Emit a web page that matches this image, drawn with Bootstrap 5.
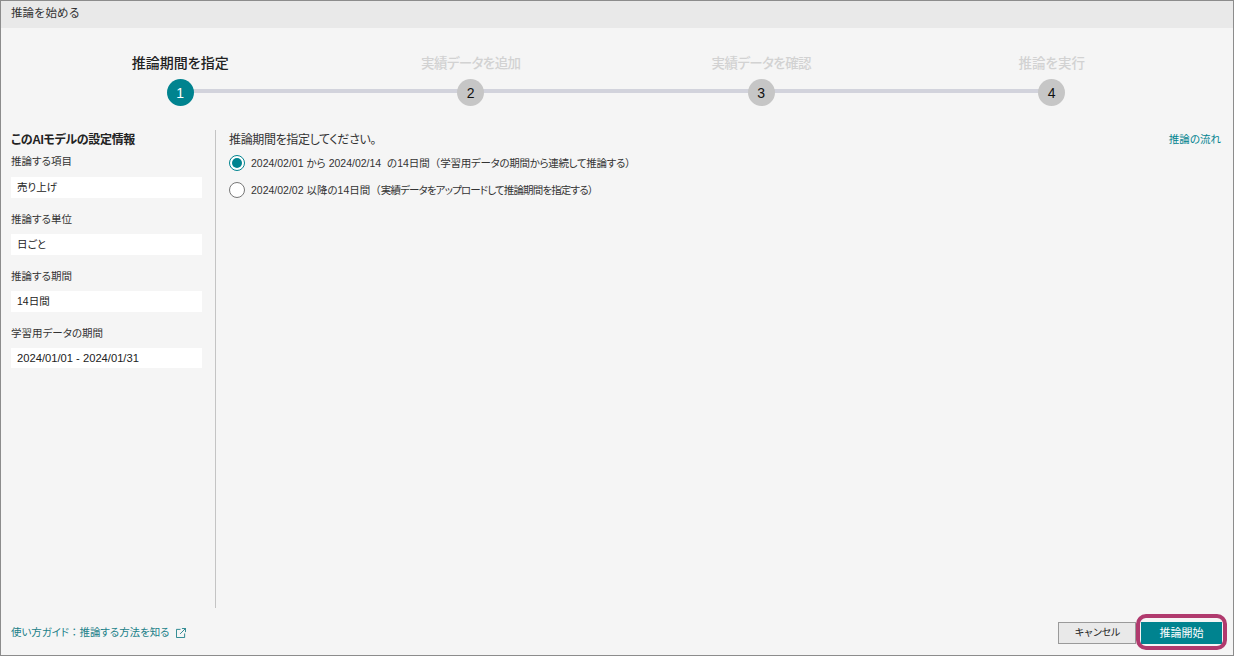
<!DOCTYPE html>
<html lang="ja">
<head>
<meta charset="utf-8">
<title>推論を始める</title>
<link href="https://cdn.jsdelivr.net/npm/bootstrap@5.3.0/dist/css/bootstrap.min.css" rel="stylesheet">
<style>
html,body{height:100%;margin:0;overflow:hidden}
body{font-family:"Liberation Sans","Noto Sans CJK JP",sans-serif;font-size:10.5px;color:#222;background:#f5f5f5;font-feature-settings:"palt"}
.win{height:656px;border:1px solid #8c8c8c;background:#f5f5f5}
.win-title{height:27px;background:#e9e9e9;padding-left:10px;font-size:11.5px;line-height:25px;color:#333;font-feature-settings:normal}
.stepper{display:grid;grid-template-columns:repeat(4,290.5px);padding:27px 0 0 34px;height:102px}
.stp{position:relative;display:flex;flex-direction:column;align-items:center;color:#d2d2d2;font-size:13.5px;font-weight:500;line-height:18px}
.stp > span:first-child{letter-spacing:-.6px}
.stp.on{color:#222;font-size:14px}
.stp.on > span:first-child{letter-spacing:0;line-height:16px;margin-bottom:2px}
.stp.wide > span:first-child{letter-spacing:0}
.dot{position:relative;z-index:1;width:27px;height:27px;margin-top:6px;border-radius:50%;background:#c6c6c6;color:#111;display:flex;align-items:center;justify-content:center;font-size:14px;font-weight:400;line-height:1}
.stp.on .dot{background:#00838f;color:#fff}
.stp:not(:last-child)::after{content:"";position:absolute;left:50%;width:100%;top:34px;height:4px;background:#d2d3dc}
.main{height:478px;padding:0 12px 0 10px}
.side{width:205px;flex:none;border-right:1px solid #c4c4c4;padding-right:13px}
.side-h{font-size:12px;font-weight:700;line-height:16px;margin:2px 0 0;color:#222;letter-spacing:-.35px}
.lbl{margin-top:7px;line-height:14px;height:14px;color:#333}
.lbl.first{margin-top:6px}
.val{background:#fff;height:21px;line-height:20px;margin-top:8px;padding-left:6px;color:#222;margin-bottom:14px}
.lbl.first + .val{margin-top:9px}
.val.last{height:20px;font-size:11.2px}
.content{padding-left:13px;min-width:0}
.c-h{font-size:12px;line-height:16px;margin-top:2px;color:#333;letter-spacing:-.35px}
.flow{font-size:10.5px;color:#00838f;line-height:14px;margin-top:2px}
.opt{display:flex;align-items:center;height:16px;gap:6px;color:#333}
.opt.one{margin-top:7px}
.opt.two{margin-top:11px}
.opt > span:last-child{padding-top:1px}
.fw{font-feature-settings:normal}
.t1{letter-spacing:-.3px}
.t2{letter-spacing:-.85px}
.rad{width:16px;height:16px;border-radius:50%;border:1px solid #777;background:#fff;flex:none;display:flex;align-items:center;justify-content:center}
.rad.sel{border:1.5px solid #00838f}
.rad.sel::before{content:"";width:10px;height:10px;border-radius:50%;background:#00838f}
.foot{height:24px;padding:14px 11px 0 10px;box-sizing:content-box}
.guide{color:#1a7f88;text-decoration:none;font-size:10.5px;display:flex;align-items:center;gap:7px;margin-top:3px;letter-spacing:-.07px}
.btn-x{position:relative;height:22px;font-size:10.5px;line-height:20px;padding:0;border-radius:0}
.btn-c{width:78px;background:#e9e9e9;border:1px solid #9a9a9a;color:#222;font-size:10px;letter-spacing:-1px}
.btn-s{width:81px;background:#00838f;border:1px solid #00838f;color:#fff;margin-left:5px;font-size:11px}
.ring{position:absolute;left:-6px;right:-6px;top:-9px;bottom:-7px;border:4px solid #b03a6e;border-radius:10px;pointer-events:none}
</style>
</head>
<body>
<div class="win d-flex flex-column">
  <div class="win-title">推論を始める</div>
  <div class="stepper">
    <div class="stp on"><span>推論期間を指定</span><span class="dot">1</span></div>
    <div class="stp"><span>実績データを追加</span><span class="dot">2</span></div>
    <div class="stp"><span>実績データを確認</span><span class="dot">3</span></div>
    <div class="stp wide"><span>推論を実行</span><span class="dot">4</span></div>
  </div>
  <div class="main d-flex">
    <div class="side">
      <div class="side-h">このAIモデルの設定情報</div>
      <div class="lbl first">推論する項目</div>
      <div class="val">売り上げ</div>
      <div class="lbl">推論する単位</div>
      <div class="val">日ごと</div>
      <div class="lbl">推論する期間</div>
      <div class="val">14日間</div>
      <div class="lbl">学習用データの期間</div>
      <div class="val last">2024/01/01 - 2024/01/31</div>
    </div>
    <div class="content flex-grow-1">
      <div class="d-flex justify-content-between">
        <div class="c-h">推論期間を指定してください。</div>
        <a class="flow text-decoration-none" href="#">推論の流れ</a>
      </div>
      <div class="opt one"><span class="rad sel"></span><span>2024/02/01 から 2024/02/14 &nbsp;の14日間<span class="fw">（</span><span class="t1">学習用データの期間から連続して推論する</span><span class="fw">）</span></span></div>
      <div class="opt two"><span class="rad"></span><span>2024/02/02 以降の14日間<span class="fw">（</span><span class="t2">実績データをアップロードして推論期間を指定する</span><span class="fw">）</span></span></div>
    </div>
  </div>
  <div class="foot d-flex justify-content-between align-items-start">
    <a class="guide" href="#"><span>使い方ガイド<span class="fw">：</span>推論する方法を知る</span>
      <svg width="10" height="10" viewBox="0 0 11 11" fill="none" stroke="#1a7f88" stroke-width="1"><path d="M5 1.5H.5v9h9V6"/><path d="M6.5.5h4v4M10.5.5 4.5 6.5"/></svg>
    </a>
    <div class="d-flex">
      <button type="button" class="btn btn-x btn-c">キャンセル</button>
      <button type="button" class="btn btn-x btn-s">推論開始<span class="ring"></span></button>
    </div>
  </div>
</div>
</body>
</html>
